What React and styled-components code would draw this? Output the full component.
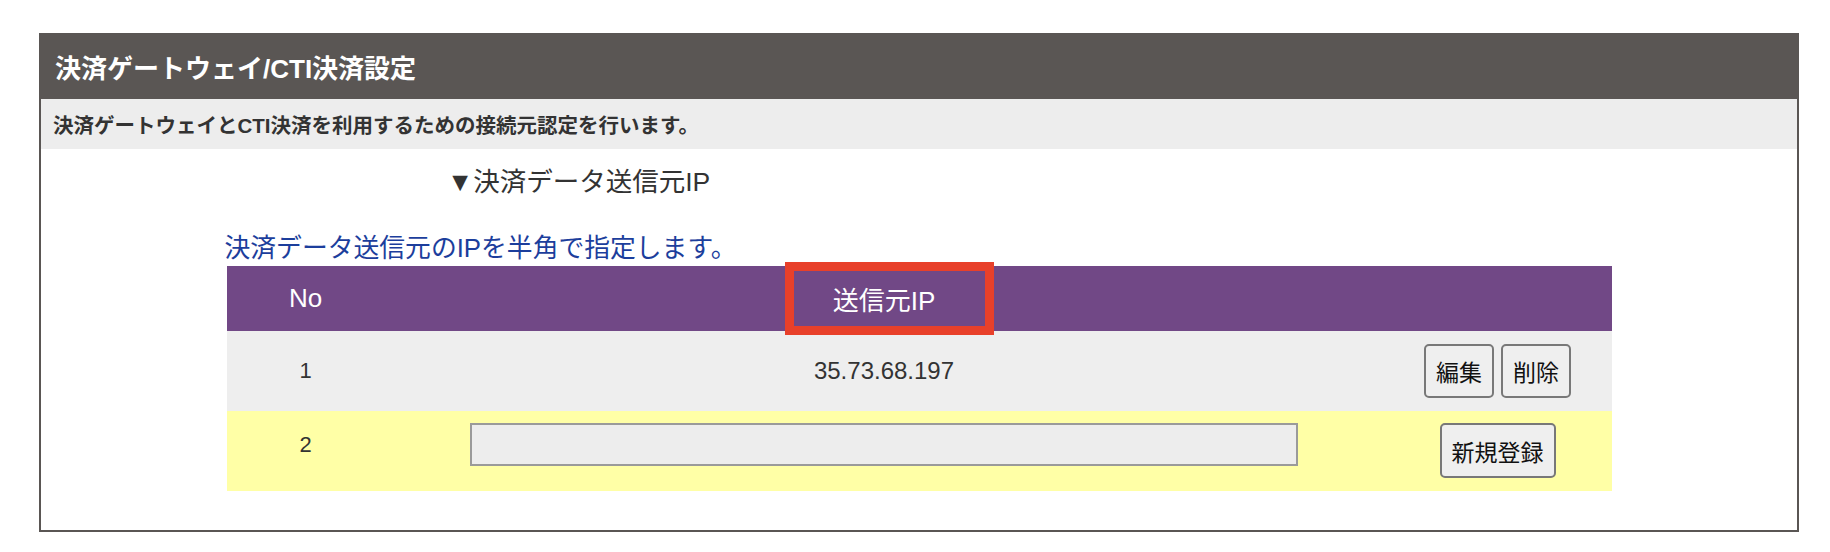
import React from "react";
import styled, { createGlobalStyle } from "styled-components";

const Global = createGlobalStyle`
  html, body { margin: 0; padding: 0; background: #ffffff; }
  body { font-family: "Liberation Sans", "Noto Sans CJK JP", sans-serif; color: #333333; }
`;

const Page = styled.div`
  padding: 33px 31px 20px 39px;
`;

const Panel = styled.section`
  border: 2px solid #5a5654;
  border-top: 0;
  padding-bottom: 39px;
`;

const TitleBar = styled.h1`
  margin: 0 -2px;
  height: 66px;
  display: flex;
  align-items: center;
  padding: 0 16px;
  background: #5a5654;
  color: #ffffff;
  font-size: 26px;
  font-weight: 700;
`;

const Description = styled.p`
  margin: 0;
  height: 50px;
  display: flex;
  align-items: center;
  padding: 0 12px;
  background: #ededed;
  color: #333333;
  font-size: 20.5px;
  font-weight: 700;
`;

const SectionHeading = styled.h2`
  margin: 0;
  padding: 13px 0 0 406px;
  line-height: 40px;
  font-size: 26.5px;
  font-weight: 400;
  color: #333333;
`;

const Block = styled.div`
  width: 1385px;
  margin: 0 auto;
`;

const Note = styled.p`
  margin: 28px 0 0 -2px;
  line-height: 36px;
  font-size: 25.8px;
  color: #1c3e9c;
`;

const Row = styled.div`
  display: grid;
  grid-template-columns: 158px 1fr 228px;
  background: ${(p) => p.$bg};
  min-height: ${(p) => p.$h}px;
  align-items: ${(p) => (p.$top ? "start" : "center")};
  padding: ${(p) => (p.$top ? "12px 0 13px" : "0")};
  box-sizing: border-box;
`;

const HeadCell = styled.div`
  position: relative;
  align-self: stretch;
  display: flex;
  align-items: center;
  justify-content: center;
  color: #ffffff;
  font-size: 26px;
`;

const Highlight = styled.span`
  position: absolute;
  top: -4px;
  bottom: -4px;
  left: calc(50% - 99px);
  width: 209px;
  border: 9px solid #e8402a;
  box-sizing: border-box;
  pointer-events: none;
`;

const Cell = styled.div`
  display: flex;
  justify-content: center;
  align-items: center;
  gap: 7px;
  font-size: ${(p) => p.$fs || 22}px;
  line-height: ${(p) => (p.$lh ? `${p.$lh}px` : "normal")};
  color: #333333;
`;

const IpInput = styled.input`
  width: 828px;
  height: 43px;
  box-sizing: border-box;
  border: 2px solid #9a9a9a;
  background: #ededed;
  font-size: 20px;
  padding: 0 8px;
  outline: none;
`;

const Button = styled.button`
  height: ${(p) => p.$h}px;
  padding: 0 10px;
  border: 2px solid #787878;
  border-radius: 5px;
  background: #efefef;
  color: #111111;
  font-family: "Noto Sans CJK JP", sans-serif;
  font-size: 23px;
  cursor: pointer;
`;

export default function App() {
  return (
    <>
      <Global />
      <Page>
        <Panel>
          <TitleBar>決済ゲートウェイ/CTI決済設定</TitleBar>
          <Description>決済ゲートウェイとCTI決済を利用するための接続元認定を行います。</Description>
          <SectionHeading>▼決済データ送信元IP</SectionHeading>
          <Block>
            <Note>決済データ送信元のIPを半角で指定します。</Note>
            <Row $bg="#714886" $h={65}>
              <HeadCell>No</HeadCell>
              <HeadCell>
                送信元IP
                <Highlight />
              </HeadCell>
              <HeadCell />
            </Row>
            <Row $bg="#eeeeee" $h={80}>
              <Cell>1</Cell>
              <Cell $fs={24}>35.73.68.197</Cell>
              <Cell>
                <Button $h={54}>編集</Button>
                <Button $h={54}>削除</Button>
              </Cell>
            </Row>
            <Row $bg="#ffffa6" $h={80} $top>
              <Cell $lh={43}>2</Cell>
              <Cell>
                <IpInput type="text" />
              </Cell>
              <Cell>
                <Button $h={55}>新規登録</Button>
              </Cell>
            </Row>
          </Block>
        </Panel>
      </Page>
    </>
  );
}
